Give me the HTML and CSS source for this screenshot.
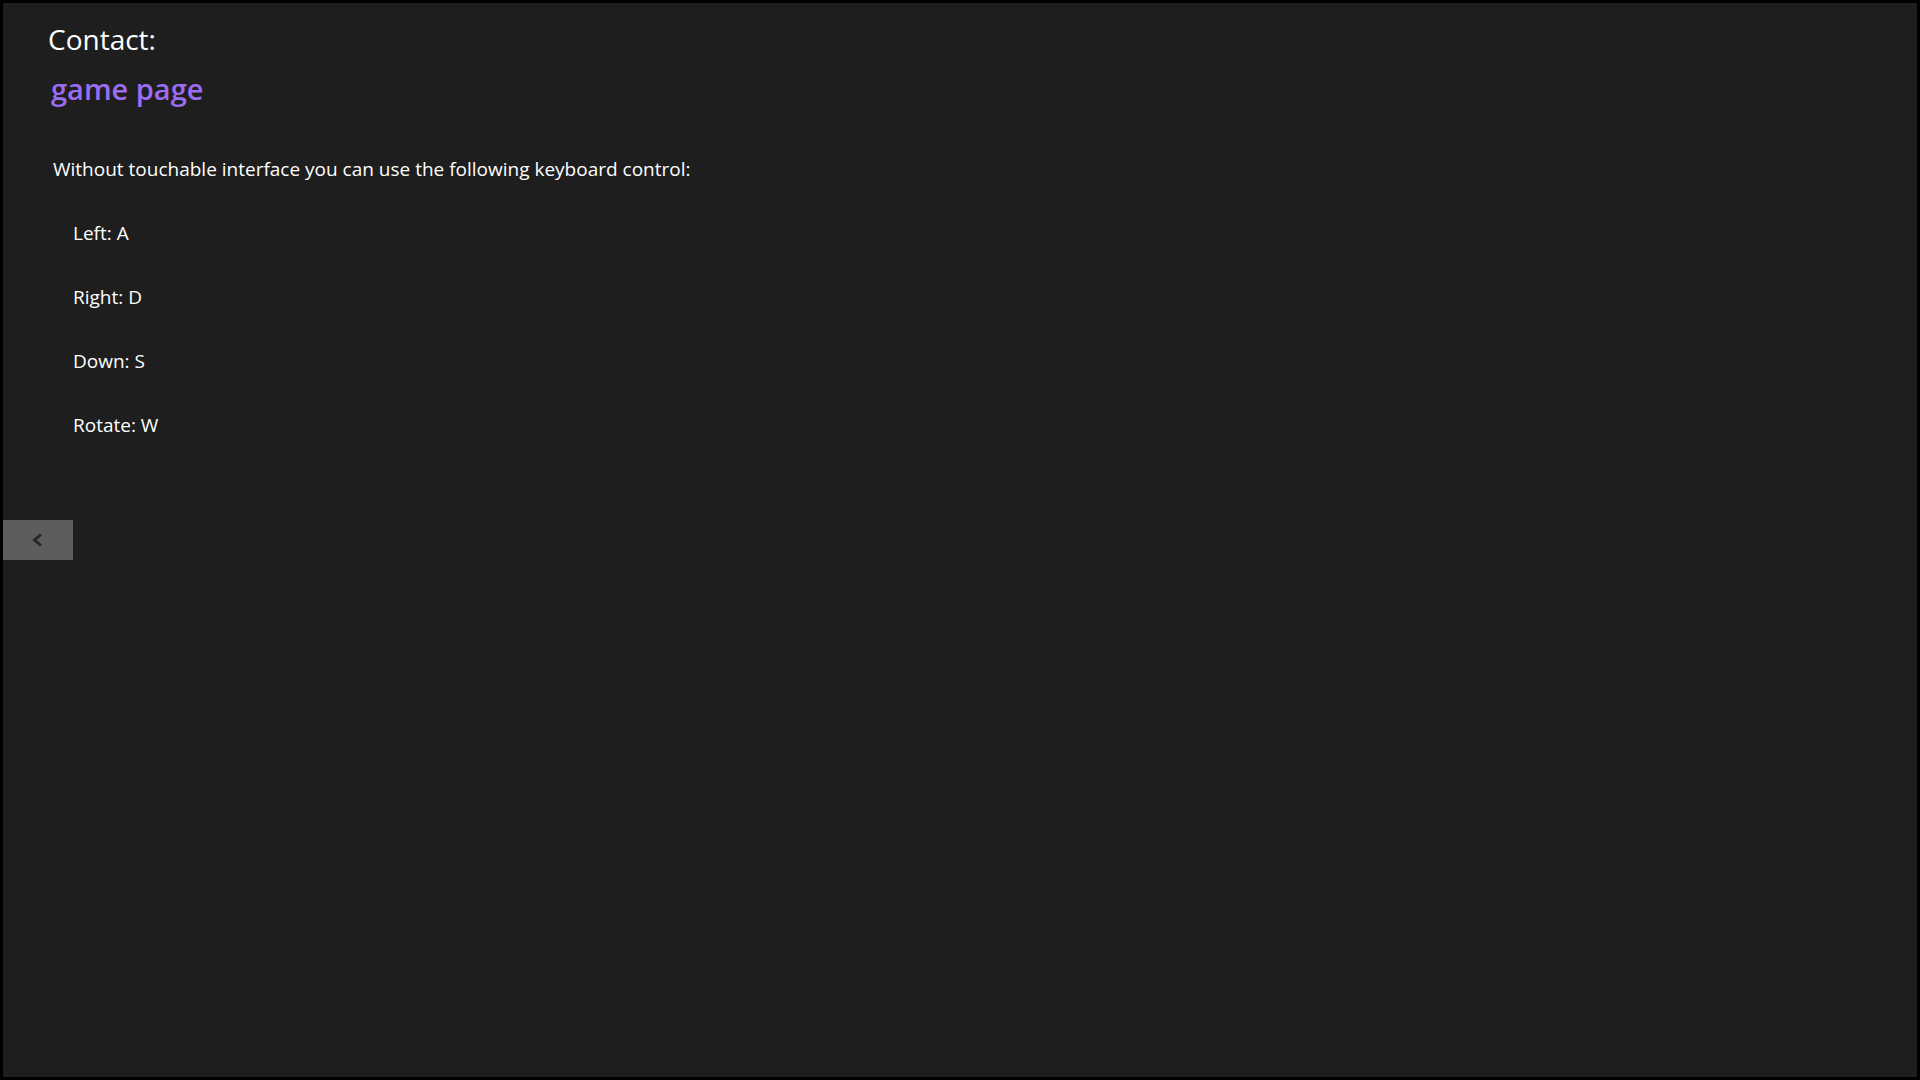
FILE: index.html
```html
<!DOCTYPE html>
<html>
<head>
  <meta charset="utf-8">
  <title>Help - Contact</title>
  <link rel="stylesheet" href="styles.css">
</head>
<body>
  <div class="frame">
    <div class="content">
      <h1>Contact:</h1>
      <a class="game-link" href="#">game page</a>

      <p class="intro">Without touchable interface you can use the following keyboard control:</p>

      <ul class="keys">
        <li>Left: A</li>
        <li>Right: D</li>
        <li>Down: S</li>
        <li>Rotate: W</li>
      </ul>
    </div>

    <button class="back-button" title="Back">
      <svg width="14" height="14" viewBox="0 0 14 14">
        <path d="M10 1.5 L3.5 7 L10 12.5" fill="none" stroke="#262626" stroke-width="2.8"/>
      </svg>
    </button>
  </div>
</body>
</html>
```

FILE: styles.css
```css
* {
  margin: 0;
  padding: 0;
  box-sizing: border-box;
}

html, body {
  height: 100%;
}

body {
  font-family: 'Open Sans', 'Noto Sans', sans-serif;
  background: #000;
  color: #fff;
  overflow: hidden;
}

.frame {
  height: 100vh;
  border: 3px solid #000;
  background: #1e1e1e;
  display: flex;
  flex-direction: column;
  align-items: flex-start;
}

.content {
  padding: 18px 0 0 45px;
  display: flex;
  flex-direction: column;
  align-items: flex-start;
}

h1 {
  font-size: 28px;
  font-weight: 400;
  line-height: 36px;
}

.game-link {
  margin-top: 12px;
  margin-left: 3px;
  font-size: 29px;
  font-weight: 600;
  line-height: 40px;
  color: #9c6cf1;
  text-decoration: none;
}

.intro {
  margin-top: 46px;
  margin-left: 5px;
  font-size: 19px;
  line-height: 28px;
}

.keys {
  list-style: none;
  margin-top: 36px;
  margin-left: 25px;
  display: flex;
  flex-direction: column;
  gap: 36px;
  font-size: 19px;
  line-height: 28px;
}

.back-button {
  margin-top: 81px;
  width: 70px;
  height: 40px;
  border: none;
  background: #5d5d5d;
  display: flex;
  align-items: center;
  justify-content: center;
  cursor: pointer;
}
```
